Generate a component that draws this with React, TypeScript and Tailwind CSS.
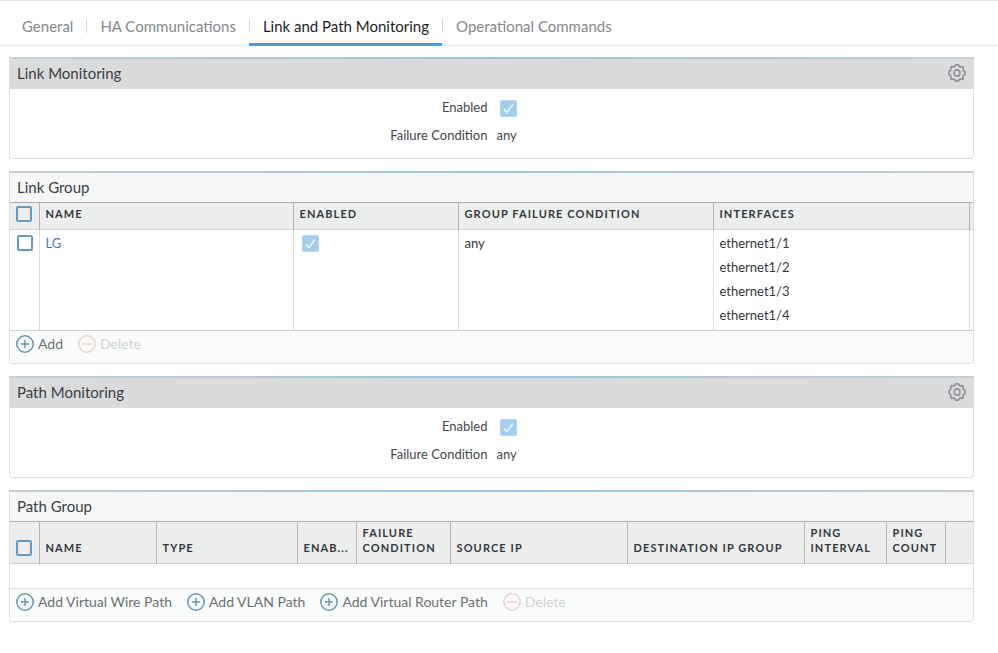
import type { ReactNode } from "react";

const tabs = [
    { id: 1, title: "General" },
    { id: 2, title: "HA Communications" },
    { id: 3, title: "Link and Path Monitoring", active: true },
    { id: 4, title: "Operational Commands" },
];

const interfaces = ["ethernet1/1", "ethernet1/2", "ethernet1/3", "ethernet1/4"];

const linkColumns = [
    { title: "Name", width: "w-[254px]" },
    { title: "Enabled", width: "w-[165px]" },
    { title: "Group Failure Condition", width: "w-[255px]" },
    { title: "Interfaces", width: "" },
    { title: "", width: "w-1" },
];

const pathColumns = [
    { title: "Name", width: "w-[117px]" },
    { title: "Type", width: "w-[141px]" },
    { title: "Enab...", width: "w-[59px]" },
    { title: "Failure Condition", width: "w-[94px]" },
    { title: "Source IP", width: "" },
    { title: "Destination IP Group", width: "w-[177px]" },
    { title: "Ping Interval", width: "w-[82px]" },
    { title: "Ping Count", width: "w-[59px]" },
    { title: "", width: "w-7" },
];

const GearIcon = () => (
    <svg viewBox="0 0 20 20" className="size-5" fill="none" stroke="#919396" strokeWidth="1.7" strokeLinejoin="round">
        <path d="M8.8 1.9h2.4l1.6 2h3.3v3.3l2 1.6v2.4l-2 1.6v3.3h-3.3l-1.6 2H8.8l-1.6-2H3.9v-3.3l-2-1.6V8.8l2-1.6V3.9h3.3z" />
        <rect x="7.2" y="6.8" width="5.6" height="6.4" rx="2.8" />
    </svg>
);

const CircleIcon = ({ plus }: { plus?: boolean }) => (
    <svg viewBox="0 0 18 18" className="size-[18px]" fill="none" stroke="currentColor" strokeWidth="1.5">
        <circle cx="9" cy="9" r="8.2" />
        {plus ? <path d="M9 5v8M5 9h8" /> : <path d="M4 9h10" />}
    </svg>
);

// read only tick box
const Checked = ({ id, label }: { id?: string; label?: string }) => (
    <span className="relative block size-[17px]">
        <input
            id={id}
            type="checkbox"
            checked
            disabled
            aria-label={label}
            className="block size-full appearance-none rounded-xs border border-[#b4d6f0] bg-[#a4cdec]"
        />
        <svg viewBox="0 0 17 17" className="pointer-events-none absolute inset-0" fill="none" stroke="#e9f5fd" strokeWidth="1.6">
            <path d="M4 9.3l2.9 3.2 6-8" />
        </svg>
    </span>
);

const SelectBox = ({ label }: { label: string }) => (
    <input
        type="checkbox"
        aria-label={label}
        className="block size-4 appearance-none rounded-xs border-2 border-[#629bc6] checked:bg-[#629bc6]"
    />
);

const Panel = ({ children }: { children: ReactNode }) => (
    <section>
        <div className="h-0.5 bg-linear-to-r from-[#c9cdd0] via-[#9dc5d8] to-[#c9cdd0]" />
        <div className="overflow-hidden rounded-b border border-t-0 border-[#dcdfe0]">{children}</div>
    </section>
);

const MonitoringPanel = ({ title, name }: { title: string; name: string }) => (
    <Panel>
        <div className="flex h-[30px] items-center justify-between bg-[#dadbdd] pr-1.5 pl-[7px]">
            <h2 className="pb-0.5 text-[15px] leading-5 text-[#3b3e42]">{title}</h2>
            <button type="button" aria-label={`${title} settings`} className="cursor-pointer pb-0.5">
                <GearIcon />
            </button>
        </div>
        <div className="grid grid-cols-2 gap-2 pt-2 pb-[13px] text-[13px] leading-5 text-[#43474b]">
            <label htmlFor={name} className="text-right">Enabled</label>
            <div className="flex items-end pl-1">
                <Checked id={name} />
            </div>
            <span className="text-right">Failure Condition</span>
            <span className="pl-px">any</span>
        </div>
    </Panel>
);

type Column = { title: string; width: string };

const TableHead = ({ columns, label }: { columns: Column[]; label: string }) => (
    <thead className="border-y border-t-[#a9adb2] border-b-[#cfd2d4] bg-[#eceeed] text-[11px] leading-[15px] text-[#33383d]">
        <tr>
            <th className="w-[29px] border-r border-[#b0b3b8] pt-[3px] pb-[7px] pl-1.5 align-bottom">
                <SelectBox label={label} />
            </th>
            {columns.map((col, i) =>
                col.title ? (
                    <th
                        key={i}
                        className={`${col.width} border-r border-[#b0b3b8] pt-[3px] pb-2 pl-1.5 text-left align-bottom font-bold tracking-widest uppercase`}
                    >
                        {col.title}
                    </th>
                ) : (
                    <td key={i} className={`${col.width} p-0`} />
                )
            )}
        </tr>
    </thead>
);

const AddButton = ({ text }: { text: string }) => (
    <button type="button" className="flex cursor-pointer items-center gap-1 text-[#6d7073]">
        <span className="text-[#6794b8]">
            <CircleIcon plus />
        </span>
        {text}
    </button>
);

const DeleteButton = () => (
    <button type="button" disabled className="flex items-center gap-1 text-[#cfd2d4]">
        <span className="text-[#f0cfcf]">
            <CircleIcon />
        </span>
        Delete
    </button>
);

const App = () => {
    return (
        <main className="min-h-screen border-t border-[#e4e4e4] bg-white font-[Lato,sans-serif]">
            {/* tabs */}
            <nav className="flex border-b border-[#e8e9ea] pl-[9px] text-[15px] leading-5">
                {tabs.map((tab) => (
                    <a
                        key={tab.id}
                        href="#"
                        className={`-mb-px flex items-center border-b-[3px] pt-[15px] pb-[7px] ${tab.active ? "border-[#3f9fe8] text-[#1b1d1f]" : "border-transparent text-[#85888c]"}`}
                    >
                        {tab.id > 1 && <span className="h-3.5 w-px bg-[#d5d7d9]" />}
                        <span className="px-[13px]">{tab.title}</span>
                    </a>
                ))}
            </nav>

            <div className="mt-[11px] mr-6 ml-[9px] space-y-3">
                <MonitoringPanel title="Link Monitoring" name="link-enabled" />

                {/* Link Group */}
                <Panel>
                    <h2 className="bg-[#f5f7f6] px-[7px] py-0.5 text-[15px] leading-[25px] text-[#3b3e42]">Link Group</h2>
                    <table className="w-full table-fixed border-collapse">
                        <TableHead columns={linkColumns} label="Select all link groups" />
                        <tbody className="text-[13px] text-[#33373b]">
                            <tr className="align-top">
                                <td className="border-r border-[#dcdee0] pt-[5px] pl-[7px]">
                                    <SelectBox label="Select LG" />
                                </td>
                                <td className="border-r border-[#dcdee0] px-1.5 pt-px pb-[3px] leading-6">
                                    <a href="#" className="text-[#3c76cf]">LG</a>
                                </td>
                                <td className="border-r border-[#dcdee0] px-2 pt-[5px]">
                                    <Checked label="LG enabled" />
                                </td>
                                <td className="border-r border-[#dcdee0] px-1.5 pt-px pb-[3px] leading-6">any</td>
                                <td className="border-r border-[#dcdee0] px-1.5 pt-px pb-[3px] leading-6">
                                    {interfaces.map((name) => (
                                        <div key={name}>{name}</div>
                                    ))}
                                </td>
                                <td className="p-0" />
                            </tr>
                        </tbody>
                    </table>
                    <div className="flex h-[33px] items-start gap-[15px] border-t border-[#cfd2d4] bg-[#fafcfb] px-1.5 pt-[3px] text-sm leading-5">
                        <AddButton text="Add" />
                        <DeleteButton />
                    </div>
                </Panel>

                <MonitoringPanel title="Path Monitoring" name="path-enabled" />

                {/* Path Group */}
                <Panel>
                    <h2 className="bg-[#f5f7f6] px-[7px] py-0.5 text-[15px] leading-[25px] text-[#3b3e42]">Path Group</h2>
                    <table className="w-full table-fixed border-collapse">
                        <TableHead columns={pathColumns} label="Select all path groups" />
                        <tbody>
                            <tr>
                                <td colSpan={10} className="h-6" />
                            </tr>
                        </tbody>
                    </table>
                    <div className="flex h-[33px] items-start gap-[15px] border-t border-[#dcdfe0] bg-[#fafcfb] px-1.5 pt-[3px] text-sm leading-5">
                        <AddButton text="Add Virtual Wire Path" />
                        <AddButton text="Add VLAN Path" />
                        <AddButton text="Add Virtual Router Path" />
                        <DeleteButton />
                    </div>
                </Panel>
            </div>
        </main>
    );
};

export default App;
